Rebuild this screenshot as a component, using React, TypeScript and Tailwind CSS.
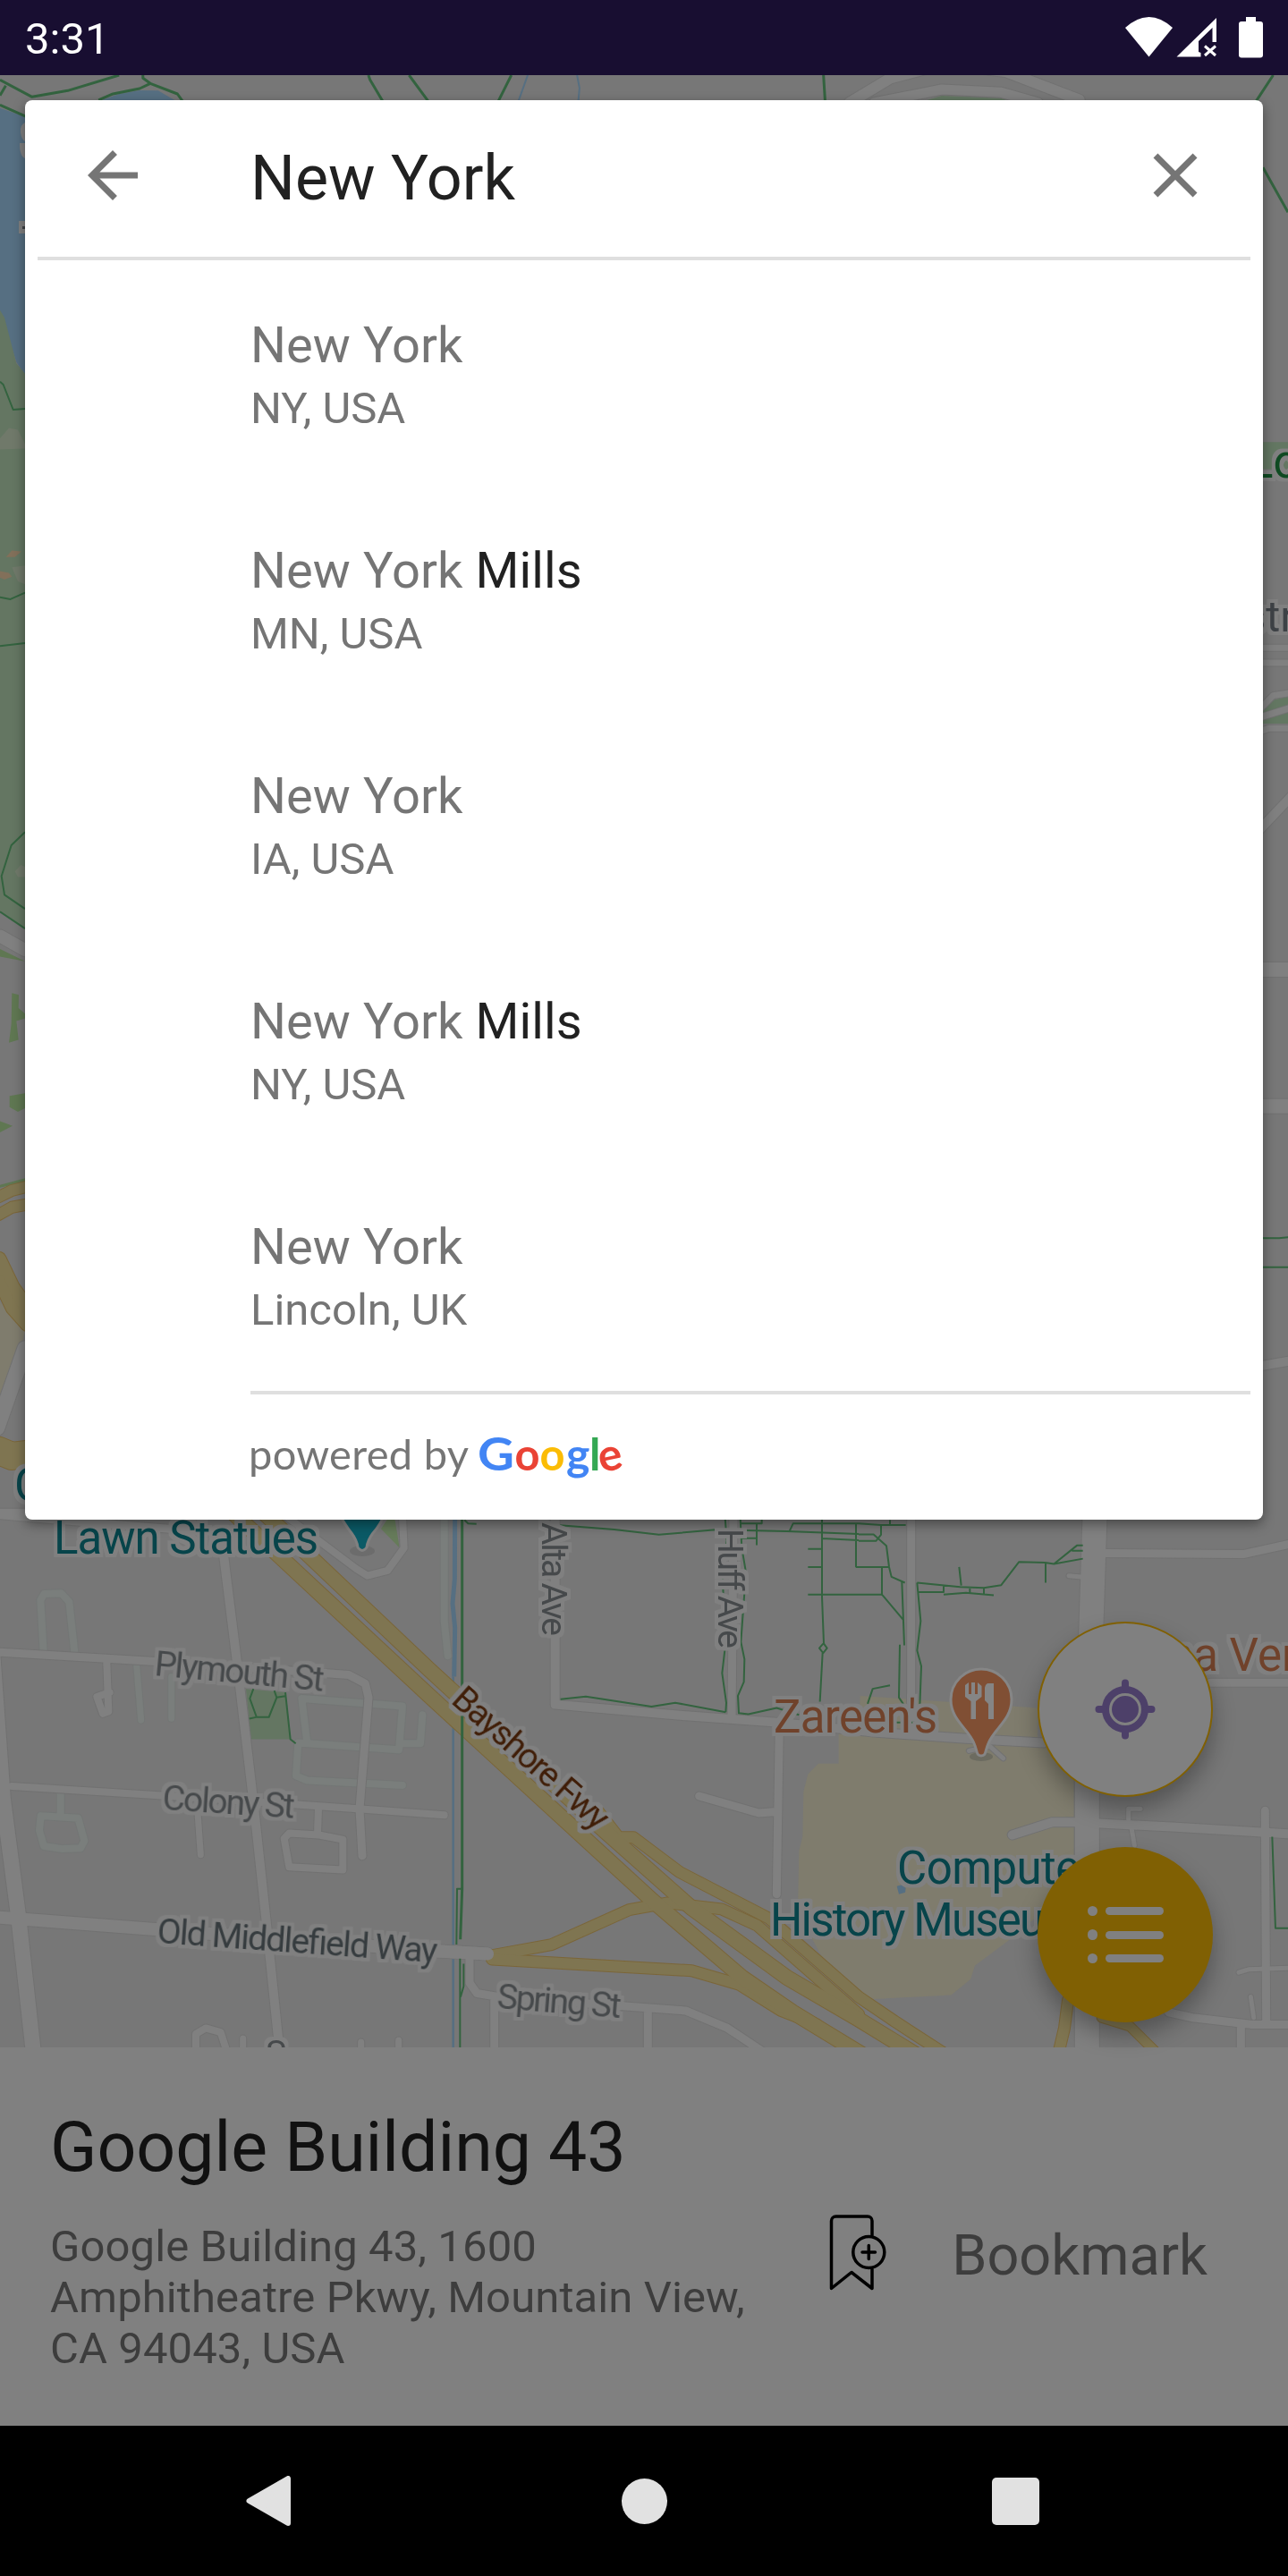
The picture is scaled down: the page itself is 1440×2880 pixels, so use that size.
import React from "react";

// Each map sheet is digitised on its own grid and placed by a transform.
const SHEETS = {
  west: "translate(0 1680) scale(0.33333 0.38903)",
  mid: "translate(480 1680) scale(0.33333 0.38903)",
  east: "translate(960 1680) scale(0.33333 0.38903)",
  left: "translate(0 80) scale(0.33333 1.04592)",
  right: "translate(1380 80) scale(0.33333 1.04592)",
  topA: "scale(0.45918 0.33333)",
  topB: "translate(720 0) scale(0.45918 0.33333)",
};
type Sheet = keyof typeof SHEETS;
type Shape = { s: Sheet; d: string; w?: number; c?: string };

const NS = "[vector-effect:non-scaling-stroke]";

const areas: Shape[] = [
  { s: "topA", c: "#566f82", d: "M240 340 L290 315 340 303 385 304 430 340Z" },
  { s: "topA", c: "#566f82", d: "M0 362 L62 392 62 1260 40 1215 0 1045Z" },
  { s: "left", c: "#647662", d: "M0 255 L15 263 55 312 84 323 84 915 0 898Z" },
  { s: "left", c: "#70796a", d: "M0 392 L30 381 60 383 84 398 84 403 0 404Z M50 855 L70 848 84 850 84 861 60 861Z M40 530 L84 528 84 548 60 545Z" },
  { s: "left", c: "#82705a", d: "M20 519 L40 512 72 513 50 519Z M0 534 L30 536 40 540 15 543 0 541Z" },
  { s: "left", c: "#5f7752", d: "M40 985 L63 987 62 1001 84 1007 84 1012 55 1015 62 1035 30 1038 38 1018Z M32 1095 L84 1092 84 1108 60 1112 32 1107Z M0 1122 L42 1127 0 1134Z M0 938 L84 951 0 946Z M0 1190 L84 1183 84 1187 0 1193Z" },
  { s: "left", c: "#7f7c6d", d: "M0 1315 L84 1345 30 1430 0 1430Z" },
  { s: "topB", c: "#637762", d: "M680 340 L725 321 870 330 890 340Z" },
  { s: "right", c: "#637762", d: "M96 396 H180 V425 H96Z M96 684 L130 672 180 668 180 697 96 697Z" },
  { s: "west", c: "#647662", d: "M825 535 L955 545 975 680 842 680Z" },
  { s: "west", c: "#667b5a", d: "M1305 40 L1325 50 1340 130 1278 75Z" },
  { s: "east", c: "#7f7c6d", d: "M5 555 L600 590 600 690 722 700 722 1100 500 1260 390 1330 375 1370 310 1415 40 1427 -100 1340 -204 1180 -200 1000 -188 960 -185 830 -170 780 -135 750 -67 750 -67 650 0 655Z" },
  { s: "east", c: "#566f82", d: "M128 1102 L145 1098 158 1108 156 1120 135 1125Z" },
];

const lanes: Shape[] = [
  { s: "west", w: 8, d: "M146 430 L136 280 148 262 205 260 232 285 250 430" },
  { s: "west", w: 7, d: "M458 465 L473 625 M575 500 V620" },
  { s: "west", w: 8, d: "M1030 690 L1012 563 1350 585 1338 710 1000 690 993 785 1030 798 1350 812 M1350 692 H1410 L1417 610" },
  { s: "west", w: 8, d: "M203 830 V895 M137 900 L262 907 283 972 270 993 210 995 147 987 132 942Z" },
  { s: "mid", w: 8, d: "M50 40 V340 L62 440" },
];

const roads: Shape[] = [
  { s: "west", w: 9, d: "M0 35 L340 60 640 80" },
  { s: "west", w: 17, d: "M-25 430 L10 850 62 1190 112 1580" },
  { s: "west", w: 10, d: "M750 150 L795 460 850 860 895 1220 938 1580" },
  { s: "west", w: 9, d: "M0 430 L560 458 1170 495 1225 520 1236 560 1206 880 1215 1015" },
  { s: "west", w: 8, d: "M40 815 L700 850 1200 880 1490 898" },
  { s: "west", w: 14, d: "M0 1192 L530 1227 1440 1287 1635 1297" },
  { s: "west", w: 8, d: "M358 460 L364 600 345 606 325 558 368 545" },
  { s: "west", w: 7, d: "M663 890 L673 1012 M815 1540 V1580 M1211 1550 V1580 M1337 1545 V1580" },
  { s: "west", w: 8, d: "M1068 880 L1065 950 M970 950 L1070 955 1150 968 1150 1055 970 1047 953 965Z" },
  { s: "west", w: 8, d: "M657 1580 V1527 L690 1510 740 1522 762 1580" },
  { s: "west", w: 8, d: "M930 20 L1195 190 1232 210 1300 195 1355 130 1350 40" },
  { s: "mid", w: 10, d: "M422 40 V580 L850 612 1175 632 1500 660 1800 678 2060 690" },
  { s: "mid", w: 9, d: "M1020 40 L1014 620" },
  { s: "mid", w: 9, d: "M1174 640 L1165 1125 M905 843 L1105 892 1165 888" },
  { s: "mid", w: 9, d: "M135 1300 V1380 L160 1410 230 1420 860 1460 1000 1510 1140 1590 M218 1420 V1580 M733 1455 V1580" },
  { s: "east", w: 9, d: "M176 40 V660" },
  { s: "east", w: 27, d: "M792 40 L780 350 766 700 V1580" },
  { s: "east", w: 9, d: "M830 145 L1290 148 1450 118 M1180 517 H1450" },
  { s: "east", w: 5, d: "M705 210 L755 214 M905 910 V880 H945 M912 920 L925 985 M370 713 L440 700 485 735" },
  { s: "east", w: 10, d: "M515 955 L650 918 H730 L1050 932 1450 952" },
  { s: "east", w: 9, d: "M1363 885 L1367 1490 M1040 1465 L1120 1480 1320 1500 1450 1500 M1282 1500 V1580" },
  { s: "east", w: 5, d: "M1275 1350 L1310 1341 1450 1337 M1315 1420 L1325 1480" },
  { s: "topB", w: 12, d: "M500 345 L600 262 730 215 880 240 1060 335" },
  { s: "topB", w: 11, d: "M560 345 L725 300 870 310 960 345" },
  { s: "left", w: 14, d: "M0 924 L84 939" },
  { s: "left", w: 17, d: "M-10 1450 L84 1365" },
  { s: "left", w: 10, d: "M0 1541 H84" },
  { s: "right", w: 7, d: "M90 616 H190 M90 632 H190 M90 705 L115 702 190 702 M90 690 L140 685 190 680 M90 680 L130 667 190 664" },
  { s: "right", w: 10, d: "M80 812 L190 775" },
  { s: "right", w: 16, d: "M80 960 H190 M80 1106 H190" },
  { s: "right", w: 10, d: "M80 1384 L190 1378" },
];

const highways: Shape[] = [
  { s: "mid", w: 12, d: "M205 1302 L410 1270 670 1170 800 1150 980 1168 1100 1215 1440 1470" },
  { s: "mid", w: 12, d: "M210 1312 L880 1345 1040 1385 1180 1460 1300 1500" },
  { s: "mid", w: 12, d: "M560 880 L635 962 685 962 840 1062 1140 1195 1440 1420 1560 1490 1740 1590" },
  { s: "mid", w: 16, d: "M-720 -20 L0 555 750 1145 1050 1365 1220 1465 1460 1590" },
  { s: "mid", w: 16, d: "M-640 -40 L0 480 590 945 880 1165 1200 1365 1440 1485 1640 1590" },
  { s: "east", w: 12, d: "M702 1430 L690 1510 668 1590" },
  { s: "east", w: 10, d: "M815 1480 L910 1505 1010 1590" },
  { s: "left", w: 12, d: "M-5 1203 L40 1196 90 1192 M-5 1222 L40 1214 90 1211" },
  { s: "left", w: 17, d: "M-5 1270 L40 1300 90 1322" },
  { s: "left", w: 13, d: "M-5 1292 L40 1322 90 1340" },
  { s: "left", w: 30, d: "M-5 1474 L40 1480 90 1478" },
];

const canals: Shape[] = [
  { s: "mid", w: 5, d: "M86 40 L85 220 78 290 86 360 83 500" },
  { s: "mid", w: 2.5, d: "M80 500 V1580" },
  { s: "topA", w: 2, d: "M1285 252 L1262 340 M1405 252 L1411 295 1408 340" },
];

const trails: Shape[] = [
  { s: "mid", w: 3, d: "M110 40 V1110 L104 1255" },
  { s: "mid", w: 2, d: "M110 1110 H93 L91 1270 M103 1310 V1580 M115 1325 V1390 L105 1420 M118 50 L130 60 158 61" },
  { s: "mid", w: 2, d: "M438 65 L620 77 770 92 960 78 1200 82 1440 90 M992 45 L998 110 983 180 987 300 997 380 982 490 996 575 994 602 M440 565 L525 557 745 586 825 575 994 602" },
  { s: "mid", w: 2, d: "M1043 45 L1048 130 1062 200 1045 400 1057 450 1055 515 1035 555 1038 605 1070 608 1165 590 1240 610 M1045 60 H1115 V45 M1045 102 H1098 M1098 60 V122" },
  { s: "mid", w: 2, d: "M1317 45 V270 L1323 405 1334 418 1321 432 1308 418 1321 405 M1319 432 L1310 572 M1270 133 H1317 M1270 185 H1317 M1270 264 H1520 M1208 82 L1220 60 H1440 M1317 103 L1440 108 M1431 60 V185" },
  { s: "east", w: 2, d: "M0 60 L75 64 H158 M0 91 H50 L93 124 102 185 110 213 155 230 M75 64 V92 L58 110 H0 M-10 185 H102 M78 185 V264 L150 337 M105 50 V64" },
  { s: "east", w: 2, d: "M145 228 L153 410 M138 408 L135 560 155 585 M196 230 L208 340 196 425 210 470 203 630 M30 578 L47 535 105 525 M0 625 L130 632 200 632" },
  { s: "east", w: 2, d: "M196 230 L340 242 420 245 478 237 538 170 625 172 655 176 732 123 H752 M715 138 H752 M655 176 L752 161 M627 172 V230 M337 185 L344 238 M198 257 H285 V237 M285 264 L360 259 453 266 M373 244 V259 M420 244 V264 M1387 960 L1398 1223 H1450" },
  { s: "topA", w: 3, d: "M0 268 L78 325 165 304 290 252 M0 320 L14 287 M0 352 L65 392 M240 336 L275 315 340 297 366 280 348 262 V252 M366 280 L432 315 445 340 M897 252 L901 268 932 340 M996 252 L1043 340 M1245 252 L1213 340" },
  { s: "topA", w: 2, d: "M0 1280 L8 1290 32 1374 62 1371" },
  { s: "topB", w: 3, d: "M437 252 L441 340 M1532 252 L1490 340 M1507 562 L1568 712" },
  { s: "left", w: 2, d: "M0 562 L35 564 84 557 M0 614 L84 611 M84 813 L38 827 5 860 15 880 84 895 M0 898 L84 916" },
  { s: "right", w: 2, d: "M90 1247 H150 L185 1246 M90 1278 H185" },
];

function Strokes({ items, color, extra = 0, cap = "round" }: { items: Shape[]; color: string; extra?: number; cap?: "round" | "butt" }) {
  return (
    <g fill="none" stroke={color} strokeLinejoin="round" strokeLinecap={cap}>
      {items.map((r, i) => (
        <path key={i} className={NS} transform={SHEETS[r.s]} d={r.d} strokeWidth={(r.w ?? 2) + extra} />
      ))}
    </g>
  );
}

function Label({ x, y, size = 39, len, angle = 0, color = "#46494b", children }: { x: number; y: number; size?: number; len?: number; angle?: number; color?: string; children: string }) {
  return (
    <text transform={`translate(${x} ${y}) rotate(${angle})`} fontSize={size} fill={color} textLength={len}>
      {children}
    </text>
  );
}

function MapView() {
  return (
    <svg className="block h-[2205px] w-[1440px]" viewBox="0 84 1440 2205" fontFamily="Roboto, sans-serif">
      <defs>
        {/* Flat grey halo around every map label */}
        <filter id="halo" filterUnits="userSpaceOnUse" x="0" y="84" width="1440" height="2205" colorInterpolationFilters="sRGB">
          <feMorphology in="SourceAlpha" operator="dilate" radius="4" result="wide" />
          <feFlood floodColor="#808080" />
          <feComposite in2="wide" operator="in" result="glow" />
          <feMerge>
            <feMergeNode in="glow" />
            <feMergeNode in="SourceGraphic" />
          </feMerge>
        </filter>
      </defs>
      <rect y="84" width="1440" height="2205" fill="#777777" />
      {areas.map((a, i) => (
        <path key={i} transform={SHEETS[a.s]} d={a.d} fill={a.c} />
      ))}
      <Strokes items={canals} color="#566f82" cap="butt" />
      <Strokes items={lanes} color="#737675" extra={2} />
      <Strokes items={lanes} color="#7a7e7c" />
      <Strokes items={roads} color="#717171" extra={2} />
      <Strokes items={roads} color="#808080" />
      <Strokes items={highways} color="#7b6639" extra={2} />
      <Strokes items={highways} color="#7f7551" />
      <path d="M480 2181 L545 2184.5" stroke="#808080" strokeWidth="14" strokeLinecap="round" />
      <Strokes items={trails} color="#33633f" cap="butt" />
      <path transform={SHEETS.west} className={NS} d="M850 535 L838 563 860 615 M836 621 L862 616 H902 L928 560 920 540 M928 560 L957 556 M957 545 L974 680 992 692" fill="none" stroke="#33633f" strokeWidth="2" />

      <g filter="url(#halo)">
        <Label x={16} y={1678} size={51} color="#07444a">G</Label>
        <Label x={60} y={1737} size={51} len={296} color="#07444a">Lawn Statues</Label>
        <Label x={172} y={1873} len={190} angle={5.4}>Plymouth St</Label>
        <Label x={181} y={2023} len={148} angle={3.8}>Colony St</Label>
        <Label x={175} y={2172} len={314} angle={4.1} color="#363c3f">Old Middlefield Way</Label>
        <Label x={555} y={2245} len={139} angle={4.6}>Spring St</Label>
        <Label x={606} y={1702} len={127} angle={90}>Alta Ave</Label>
        <Label x={803} y={1709} len={134} angle={90}>Huff Ave</Label>
        <Label x={503} y={1903} len={219} angle={41.5} color="#401e08">Bayshore Fwy</Label>
        <Label x={865} y={1937} size={51} len={183} color="#70422b">Zareen's</Label>
        <Label x={1003} y={2106} size={51} len={221} color="#07444a">Computer</Label>
        <Label x={861} y={2164} size={51} len={350} color="#07444a">History Museum</Label>
        <Label x={1306} y={1867.5} size={51} color="#70422b">na Ver</Label>
        <Label x={297} y={2309}>S</Label>
        <Label x={1396} y={534} size={51} color="#0f4a22">Lo</Label>
        <Label x={1390} y={706} size={49} color="#3e4246">str</Label>
      </g>
      <g fill="#808080">
        <path d="M28 137 q-6 3 -5 11 q1 8 5 10Z M22 160 h6 v17 q-6 -2 -6 -17Z M21 247 h7 v14 h-7Z" />
        <rect x="25" y="253" width="3" height="3" fill="#3e4246" />
      </g>

      {/* Landmark pin */}
      <ellipse cx="405" cy="1734" rx="14" ry="6" fill="#6c6c6c" />
      <path d="M378 1690 Q385 1704 393 1714 Q399 1722 400 1730 Q405 1737 410 1730 Q411 1722 417 1714 Q426 1704 431 1690Z" fill="#0b5a66" stroke="#808080" strokeWidth="3" />

      {/* Restaurant pin */}
      <ellipse cx="1097" cy="1964" rx="13" ry="5" fill="#6c6b60" />
      <path d="M1097 1866 a34 34 0 0 1 34 34 c0 23 -19 32 -26 49 c-4 9 -2 14 -8 14 s-4 -5 -8 -14 c-7 -17 -26 -26 -26 -49 a34 34 0 0 1 34 -34Z" fill="#804f34" stroke="#868686" strokeWidth="3" />
      <path d="M1079 1884 l4 -3 v13 h3 v-13 h4 v13 h3 v-13 l4.500 4 v12 l-6.500 5 v20 h-5.500 v-20 l-6.500 -5Z M1111 1922 h-6 v-17 l-4 -4 v-14 q1 -5 4 -5 h6Z" fill="#858585" />
    </svg>
  );
}

function StatusBar() {
  return (
    <header className="flex h-[84px] items-center justify-between bg-[#180e31] pr-7 pl-7 text-white">
      <span className="pt-[3px] text-[49px] leading-[57px]">3:31</span>
      <svg className="h-[84px] w-[156px]" viewBox="1256 0 156 84" fill="currentColor">
        <path d="M1258 31 Q1284.500 7 1311 31 L1284.500 63.500Z" />
        <path d="M1360 20 V47 H1355.500 V31 L1340 46 V58 L1342.500 59 V63.500 H1315.500Z" />
        <path d="M1347 51.500 L1359 62 M1359 51.500 L1347 62" stroke="currentColor" strokeWidth="3" />
        <path d="M1393 19 H1404 V24 H1409 a3 3 0 0 1 3 3 V61.500 a3 3 0 0 1 -3 3 H1388 a3 3 0 0 1 -3 -3 V27 a3 3 0 0 1 3 -3 H1393Z" />
      </svg>
    </header>
  );
}

const results = [
  { match: "New York", rest: "", place: "NY, USA" },
  { match: "New York", rest: " Mills", place: "MN, USA" },
  { match: "New York", rest: "", place: "IA, USA" },
  { match: "New York", rest: " Mills", place: "NY, USA" },
  { match: "New York", rest: "", place: "Lincoln, UK" },
];

function SearchCard() {
  return (
    <section className="absolute top-7 left-7 flex h-[1587px] w-[1384px] flex-col rounded-[8px] bg-white text-[#757575] shadow-[0_5px_14px_rgba(0,0,0,0.4)]">
      <div className="flex h-[175px] shrink-0 items-center pr-14 pl-14">
        <svg className="mb-[7px] h-[84px] w-[84px]" viewBox="0 0 24 24" fill="currentColor">
          <path d="M20 11H7.830l5.590-5.590L12 4l-8 8 8 8 1.410-1.410L7.830 13H20v-2z" />
        </svg>
        <div className="mb-[2px] ml-28 flex-1 text-[70px] leading-[82px] text-[#212121]">New York</div>
        <svg className="mb-[7px] h-[84px] w-[84px]" viewBox="0 0 24 24" fill="currentColor">
          <path d="M19 6.410L17.590 5 12 10.590 6.410 5 5 6.410 10.590 12 5 17.590 6.410 19 12 13.410 17.590 19 19 17.590 13.410 12z" />
        </svg>
      </div>
      <div className="mx-3.5 h-1 shrink-0 bg-[#dfdfdf]" />
      <ul className="mt-1">
        {results.map((r, i) => (
          <li key={i} className="flex h-[252px] flex-col pt-[58px] pl-[252px]">
            <span className="text-[56px] leading-[66px] tracking-[0.1px] whitespace-pre">
              {r.match}
              <span className="text-[#212121]">{r.rest}</span>
            </span>
            <span className="mt-[9px] text-[49px] leading-[57px]">{r.place}</span>
          </li>
        ))}
      </ul>
      <div className="mr-3.5 ml-[252px] h-1 shrink-0 bg-[#dfdfdf]" />
      <svg className="ml-[252px] h-[140px] w-[430px]" viewBox="280 1559 430 140" fontFamily="Lato, sans-serif">
        <text x="278" y="1643" fontSize="47" fill="#757575" textLength="246">powered by</text>
        <g fontSize="50" fontWeight="700">
          <text x="534" y="1644" fontSize="51" fill="#4285f4" textLength="41" lengthAdjust="spacingAndGlyphs">G</text>
          <text x="575.500" y="1644" fill="#ea4335" textLength="28" lengthAdjust="spacingAndGlyphs">o</text>
          <text x="603.500" y="1644" fill="#fbbc05" textLength="28" lengthAdjust="spacingAndGlyphs">o</text>
          <text x="633" y="1644" fill="#4285f4">g</text>
          <text x="659" y="1644" fill="#34a853">l</text>
          <text transform="translate(672 1646.500) rotate(-12)" fill="#ea4335">e</text>
        </g>
      </svg>
    </section>
  );
}

function FloatingButtons() {
  return (
    <div className="absolute top-[1729px] left-[1160px] flex flex-col gap-14">
      <div className="flex h-[196px] w-[196px] items-center justify-center rounded-full border-[2px] border-[#806003] bg-[#808080] shadow-[0_14px_26px_rgba(0,0,0,0.3)]">
        <svg className="h-[68px] w-[68px]" viewBox="-34 -34 68 68" fill="#4d4069">
          <circle r="15" />
          <circle r="22" fill="none" stroke="#4d4069" strokeWidth="8" />
          <path d="M0 -29.500 V-24 M0 29.500 V24 M-29.500 0 H-24 M29.500 0 H24" stroke="#4d4069" strokeWidth="8" strokeLinecap="round" />
        </svg>
      </div>
      <div className="flex h-[196px] w-[196px] items-center justify-center rounded-full bg-[#806003] shadow-[0_14px_26px_rgba(0,0,0,0.3)]">
        <div className="flex w-[85px] flex-col gap-[15px]">
          {[0, 1, 2].map((i) => (
            <div key={i} className="flex items-center justify-between">
              <span className="size-[11.500px] rounded-full bg-[#808080]" />
              <span className="h-[9px] w-[65px] rounded-full bg-[#808080]" />
            </div>
          ))}
        </div>
      </div>
    </div>
  );
}

function PlaceSheet() {
  return (
    <section className="flex h-[423px] justify-between bg-[#808080] pl-14">
      <div className="pt-[67px]">
        <h1 className="text-[77px] leading-[90px] text-[#111111]">Google Building 43</h1>
        <p className="mt-[37px] text-[49px] leading-[57px] tracking-[0.1px] text-[#3d3d3d]">
          Google Building 43, 1600
          <br />
          Amphitheatre Pkwy, Mountain View,
          <br />
          CA 94043, USA
        </p>
      </div>
      <div className="flex pt-[183px]">
        <svg className="h-[92px] w-[70px]" viewBox="924 2472 70 92" fill="none" stroke="#000" strokeWidth="3.500" strokeLinejoin="round" strokeLinecap="round">
          <path d="M975 2499 V2483 a5 5 0 0 0 -5 -5 H934.500 a5 5 0 0 0 -5 5 V2558.500 L952 2540.500 L975 2558.500 V2537" />
          <circle cx="971.300" cy="2518" r="17.500" />
          <path d="M964 2518 H978.500 M971.300 2510.500 V2525.500" />
        </svg>
        <span className="mt-[13px] mr-[90px] ml-[70px] text-[63px] leading-[74px] text-[#3d3d3d]">Bookmark</span>
      </div>
    </section>
  );
}

function NavBar() {
  return (
    <nav className="flex h-[168px] items-center justify-between bg-black pr-[278px] pl-[275px]">
      <svg className="h-[56px] w-[50px]" viewBox="0 0 50 56" fill="#e1e1e1" stroke="#e1e1e1" strokeWidth="6" strokeLinejoin="round">
        <path d="M47 3 V53 L3.500 28Z" />
      </svg>
      <span className="ml-[41px] size-[51px] rounded-full bg-[#e1e1e1]" />
      <span className="ml-[34px] size-[53px] rounded-[5px] bg-[#e1e1e1]" />
    </nav>
  );
}

export default function App() {
  return (
    <div className="h-[2880px] w-[1440px] overflow-hidden bg-[#777777] font-[Roboto,sans-serif]">
      <StatusBar />
      <main className="relative">
        <MapView />
        <PlaceSheet />
        <FloatingButtons />
        <SearchCard />
      </main>
      <NavBar />
    </div>
  );
}
